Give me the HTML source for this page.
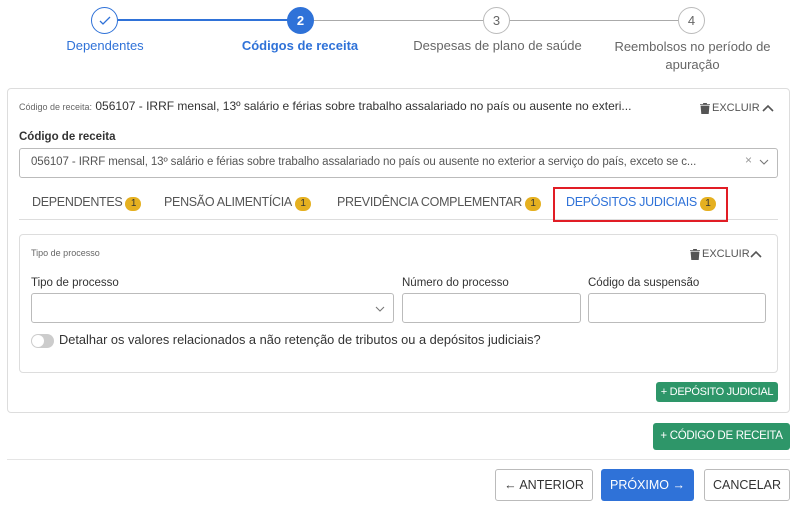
<!DOCTYPE html>
<html><head><meta charset="utf-8"><style>
*{box-sizing:border-box;margin:0;padding:0}
body{width:799px;height:508px;background:#fff;font-family:"Liberation Sans",sans-serif;color:#333;position:relative;overflow:hidden}
.a{position:absolute;white-space:nowrap}
.c{position:absolute;width:27px;height:27px;border-radius:50%;border:1px solid #bbb;background:#fff;text-align:center;line-height:25px;font-size:13px;color:#666}
.lbl{position:absolute;font-size:13px;text-align:center;color:#666}
.box{position:absolute;border:1px solid #ddd;border-radius:4px;background:#fff}
.inp{position:absolute;border:1px solid #bbb;border-radius:3px;background:#fff}
.b{display:inline-block;background:#e5b020;color:#333;border-radius:8px;font-size:10px;width:16px;height:14px;line-height:14px;text-align:center;vertical-align:0px;margin-left:3px}
.tab{position:absolute;top:195px;font-size:12.5px;color:#555}
.btn{position:absolute;border-radius:3px;font-size:12px;text-align:center}
.ex{position:absolute;font-size:11px;color:#555}
</style></head><body>
<div class="a" style="left:118px;top:19px;width:170px;height:2px;background:#2f72d8"></div>
<div class="a" style="left:313px;top:20px;width:370px;height:1px;background:#aaa"></div>
<div class="c" style="left:91px;top:7px;border-color:#2f72d8;color:#2f72d8">
<svg width="12" height="10" viewBox="0 0 12 10" style="margin-top:8px"><path d="M1 5l3 3 7-7" fill="none" stroke="#2f72d8" stroke-width="1.3"/></svg></div>
<div class="c" style="left:287px;top:7px;background:#2f72d8;border-color:#2f72d8;color:#fff;font-weight:bold">2</div>
<div class="c" style="left:483px;top:7px">3</div>
<div class="c" style="left:678px;top:7px">4</div>
<div class="lbl" style="left:40px;width:130px;top:38px;color:#2f72d8">Dependentes</div>
<div class="lbl" style="left:220px;width:160px;top:38px;color:#2f72d8;font-weight:bold">Códigos de receita</div>
<div class="lbl" style="left:400px;width:195px;top:38px">Despesas de plano de saúde</div>
<div class="lbl" style="left:600px;width:185px;top:38px;line-height:18px">Reembolsos no período de<br>apuração</div>

<div class="box" style="left:7px;top:88px;width:783px;height:325px"></div>
<div class="a" style="left:19px;top:99px;font-size:12px;color:#333"><span style="font-size:9px;color:#666">Código de receita:</span> 056107 - IRRF mensal, 13º salário e férias sobre trabalho assalariado no país ou ausente no exteri...</div>
<svg class="a" style="left:700px;top:103px" width="10" height="11" viewBox="0 0 10 11"><path d="M0 1.5h10M3.5 1.5V0h3v1.5M1 3h8l-.7 8H1.7z" fill="#555" stroke="#555" stroke-width=".8"/></svg>
<div class="ex" style="left:712px;top:102px">EXCLUIR</div>
<svg class="a" style="left:762px;top:104px" width="12" height="8"><path d="M1 7l5-5 5 5" fill="none" stroke="#555" stroke-width="1.6"/></svg>
<div class="a" style="left:19px;top:131px;font-size:11.5px;font-weight:bold;color:#333">Código de receita</div>
<div class="inp" style="left:19px;top:148px;width:759px;height:30px"></div>
<div class="a" style="left:31px;top:156px;font-size:11.5px;color:#555;letter-spacing:-0.1px">056107 - IRRF mensal, 13º salário e férias sobre trabalho assalariado no país ou ausente no exterior a serviço do país, exceto se c...</div>
<div class="a" style="left:745px;top:153px;font-size:12px;color:#999">×</div>
<svg class="a" style="left:759px;top:159px" width="10" height="6"><path d="M1 1l4 4 4-4" fill="none" stroke="#777" stroke-width="1.1"/></svg>

<div class="tab" style="left:32px;letter-spacing:-0.3px">DEPENDENTES<span class="b">1</span></div>
<div class="tab" style="left:164px;letter-spacing:-0.3px">PENSÃO ALIMENTÍCIA<span class="b">1</span></div>
<div class="tab" style="left:337px;letter-spacing:-0.3px">PREVIDÊNCIA COMPLEMENTAR<span class="b">1</span></div>
<div class="tab" style="left:566px;color:#2f72d8;letter-spacing:-0.3px">DEPÓSITOS JUDICIAIS<span class="b">1</span></div>
<div class="a" style="left:19px;top:219px;width:759px;height:1px;background:#ddd"></div>
<div class="a" style="left:553px;top:187px;width:175px;height:35px;border:2px solid #e11d25"></div>

<div class="box" style="left:19px;top:234px;width:759px;height:139px"></div>
<div class="a" style="left:31px;top:248px;font-size:9px;color:#666">Tipo de processo</div>
<svg class="a" style="left:690px;top:249px" width="10" height="11" viewBox="0 0 10 11"><path d="M0 1.5h10M3.5 1.5V0h3v1.5M1 3h8l-.7 8H1.7z" fill="#555" stroke="#555" stroke-width=".8"/></svg>
<div class="ex" style="left:702px;top:248px">EXCLUIR</div>
<svg class="a" style="left:750px;top:250px" width="12" height="8"><path d="M1 7l5-5 5 5" fill="none" stroke="#555" stroke-width="1.6"/></svg>
<div class="a" style="left:31px;top:277px;font-size:11.5px;color:#333">Tipo de processo</div>
<div class="a" style="left:402px;top:277px;font-size:11.5px;color:#333">Número do processo</div>
<div class="a" style="left:588px;top:277px;font-size:11.5px;color:#333">Código da suspensão</div>
<div class="inp" style="left:31px;top:293px;width:363px;height:30px"></div>
<svg class="a" style="left:375px;top:306px" width="10" height="6"><path d="M1 1l4 4 4-4" fill="none" stroke="#777" stroke-width="1.1"/></svg>
<div class="inp" style="left:402px;top:293px;width:179px;height:30px"></div>
<div class="inp" style="left:588px;top:293px;width:178px;height:30px"></div>
<div class="a" style="left:31px;top:334px;width:23px;height:14px;border-radius:7px;background:#ccc"></div>
<div class="a" style="left:32px;top:335px;width:12px;height:12px;border-radius:50%;background:#fff"></div>
<div class="a" style="left:59px;top:332px;font-size:12.8px;color:#333">Detalhar os valores relacionados a não retenção de tributos ou a depósitos judiciais?</div>

<div class="btn" style="left:656px;top:382px;width:122px;height:20px;background:#2e9669;color:#fff;font-size:11px;line-height:20px;letter-spacing:-0.3px">+ DEPÓSITO JUDICIAL</div>
<div class="btn" style="left:653px;top:423px;width:137px;height:27px;background:#2e9669;color:#fff;line-height:27px;font-size:11.5px;letter-spacing:-0.3px">+ CÓDIGO DE RECEITA</div>
<div class="a" style="left:7px;top:459px;width:783px;height:1px;background:#e5e5e5"></div>
<div class="btn" style="left:495px;top:469px;width:98px;height:32px;border:1px solid #bbb;line-height:30px;color:#333;font-size:12.5px">← ANTERIOR</div>
<div class="btn" style="left:601px;top:469px;width:93px;height:32px;background:#2f72d8;line-height:32px;color:#fff;font-size:12.5px">PRÓXIMO →</div>
<div class="btn" style="left:704px;top:469px;width:86px;height:32px;border:1px solid #bbb;line-height:30px;color:#333;font-size:12.5px">CANCELAR</div>
</body></html>
